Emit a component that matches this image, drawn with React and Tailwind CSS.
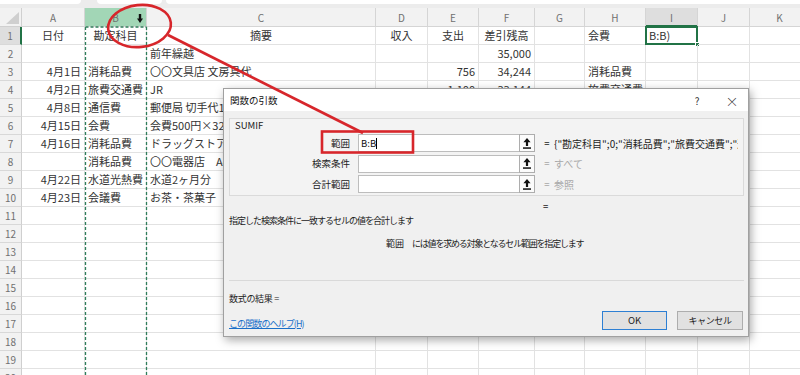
import React from 'react';

const COLS = ['A', 'B', 'C', 'D', 'E', 'F', 'G', 'H', 'I', 'J', 'K'];

const DATA = {
  1: { A: ['日付', 'c'], B: ['勘定科目', 'c'], C: ['摘要', 'c'], D: ['収入', 'c'], E: ['支出', 'c'], F: ['差引残高', 'c'], H: ['会費', 'l'], I: ['B:B)', 'l'] },
  2: { C: ['前年繰越', 'l'], F: ['35,000', 'r'] },
  3: { A: ['4月1日', 'r'], B: ['消耗品費', 'l'], C: ['〇〇文具店 文房具代', 'l'], E: ['756', 'r'], F: ['34,244', 'r'], H: ['消耗品費', 'l'] },
  4: { A: ['4月2日', 'r'], B: ['旅費交通費', 'l'], C: ['JR', 'l'], E: ['1,100', 'r'], F: ['33,144', 'r'], H: ['旅費交通費', 'l'] },
  5: { A: ['4月8日', 'r'], B: ['通信費', 'l'], C: ['郵便局 切手代10枚', 'l'], E: ['840', 'r'], F: ['32,304', 'r'], H: ['通信費', 'l'] },
  6: { A: ['4月15日', 'r'], B: ['会費', 'l'], C: ['会費500円×32名', 'l'] },
  7: { A: ['4月16日', 'r'], B: ['消耗品費', 'l'], C: ['ドラッグストア　洗剤', 'l'] },
  8: { B: ['消耗品費', 'l'], C: ['〇〇電器店　A4用紙', 'l'] },
  9: { A: ['4月22日', 'r'], B: ['水道光熱費', 'l'], C: ['水道2ヶ月分', 'l'] },
  10: { A: ['4月23日', 'r'], B: ['会議費', 'l'], C: ['お茶・茶菓子', 'l'] },
};

const ROWS = Array.from({ length: 20 }, (_, i) => i + 1);

function alignClass(a) {
  if (a === 'r') return 'justify-end';
  if (a === 'c') return 'justify-center';
  return 'justify-start';
}

function RangeIcon() {
  return (
    <svg width="8" height="11" viewBox="0 0 8 11">
      <polygon points="4,0 7.6,4.2 5.1,4.2 5.1,8 2.9,8 2.9,4.2 0.4,4.2" fill="#111" />
      <rect x="0" y="9.3" width="8" height="1.5" fill="#111" />
    </svg>
  );
}

function ArgRow({ label, value, valueGrey, active }) {
  return (
    <div className="flex items-center h-[18px]">
      <div className="w-[120px] text-right text-[9.5px] text-[#222]">{label}</div>
      <div className="ml-[8px] w-[162px] h-[18px] border border-[#bdbdbd] bg-white flex items-center pl-[2px] text-[9.5px] text-[#111]">
        {active && (
          <>
            <span>B:B</span>
            <span className="w-px h-[11px] bg-black"></span>
          </>
        )}
      </div>
      <div className="-ml-px w-[16px] h-[18px] border border-[#adadad] bg-[#fbfbfb] flex items-center justify-center">
        <RangeIcon />
      </div>
      <div className={`ml-[8px] w-[8px] text-center text-[9.5px] ${valueGrey ? 'text-[#a8a8a8]' : 'text-[#222]'}`}>=</div>
      <div className={`ml-[3px] flex-1 overflow-hidden whitespace-nowrap mr-[5px] text-[10px] ${valueGrey ? 'text-[#a8a8a8]' : 'text-[#222]'}`}>
        {value}
      </div>
    </div>
  );
}

function Dialog() {
  return (
    <div className="absolute left-[223px] top-[88px] w-[526px] h-[249px] bg-[#f0f0f0] border border-[#a0a0a0] shadow-[2px_3px_9px_rgba(0,0,0,0.35)] flex flex-col z-10">
      <div className="h-[22px] bg-white flex items-center pl-[6px] text-[9.5px] text-[#111] shrink-0">
        <span>関数の引数</span>
        <span className="ml-auto w-[20px] text-center text-[10px] text-[#333]">?</span>
        <span className="ml-[15px] mr-[6px] w-[20px] text-center text-[13px] leading-none text-[#333] font-light">×</span>
      </div>
      <div className="ml-[5px] mr-[4px] mt-[7px] h-[78px] border border-[#dadada] bg-[#f3f3f3] shrink-0">
        <div className="pl-[5px] h-[12px] leading-[12px] text-[9.5px] text-[#222]">SUMIF</div>
        <div className="mt-[3px] flex flex-col gap-[2.5px]">
          <ArgRow label="範囲" active value={'{"勘定科目";0;"消耗品費";"旅費交通費";"通信費";"会費"}'} />
          <ArgRow label="検索条件" valueGrey value="すべて" />
          <ArgRow label="合計範囲" valueGrey value="参照" />
        </div>
      </div>
      <div className="mt-[3px] h-[14px] leading-[14px] pl-[319px] text-[9.5px] text-[#222] shrink-0">=</div>
      <div className="mt-[1px] h-[14px] leading-[14px] pl-[5px] text-[9px] tracking-[-1px] text-[#222] shrink-0">
        指定した検索条件に一致するセルの値を合計します
      </div>
      <div className="mt-[9px] h-[14px] leading-[14px] pl-[162px] flex text-[9px] text-[#222] shrink-0">
        <span>範囲</span>
        <span className="ml-[8px] tracking-[-1.2px]">には値を求める対象となるセル範囲を指定します</span>
      </div>
      <div className="mt-[29px] ml-[5px] mr-[4px] h-px bg-[#d9d9d9] shrink-0"></div>
      <div className="flex flex-1">
        <div className="flex flex-col pl-[5px]">
          <div className="mt-[11px] h-[14px] leading-[14px] text-[9px] tracking-[-0.3px] text-[#222]">数式の結果 =</div>
          <div className="mt-[11px] h-[14px] leading-[14px] text-[9px] tracking-[-0.9px] text-[#1a6fc9] underline">この関数のヘルプ(H)</div>
        </div>
        <div className="ml-auto self-end mb-[6px] mr-[5px] flex gap-[10px]">
          <div className="w-[65px] h-[19px] border border-[#2d7fd3] bg-[#e1e1e1] flex items-center justify-center text-[9.5px] text-[#222]">OK</div>
          <div className="w-[66px] h-[19px] border border-[#adadad] bg-[#e1e1e1] flex items-center justify-center text-[9px] tracking-[-0.4px] text-[#222]">キャンセル</div>
        </div>
      </div>
    </div>
  );
}

function HeaderRow() {
  return (
    <>
      <div className="h-[19px] bg-[#f2f2f2] border-r border-b border-[#d0d0d0] relative">
        <svg className="absolute right-[2px] bottom-[2px]" width="13" height="12" viewBox="0 0 13 12">
          <polygon points="13,0 13,12 0,12" fill="#cfcfcf" />
        </svg>
      </div>
      {COLS.map((c) => {
        let bg = 'bg-[#f2f2f2]';
        if (c === 'B') bg = 'bg-[#a2d6b6]';
        if (c === 'I') bg = 'bg-[#dedede]';
        return (
          <div key={c} className={`h-[19px] ${bg} border-r border-b border-[#d5d5d5] flex items-center justify-center text-[10px] text-[#707070] relative`}>
            {c}
            {c === 'B' && (
              <svg className="absolute left-[52px] top-[6px]" width="6" height="9" viewBox="0 0 6 9">
                <rect x="1.8" y="0" width="2.4" height="5" fill="#111" />
                <polygon points="0,4.5 6,4.5 3,9" fill="#111" />
              </svg>
            )}
            {c === 'I' && <div className="absolute left-0 right-0 -bottom-px h-[2px] bg-[#217346]"></div>}
          </div>
        );
      })}
    </>
  );
}

function Sheet() {
  return (
    <div className="grid grid-cols-[22px_63px_62px_229px_52px_51px_56px_50px_61px_52px_52px_60px] bg-white">
      <HeaderRow />
      {ROWS.map((r) => (
        <React.Fragment key={r}>
          <div
            className={`h-[18px] border-b border-[#d8d8d8] flex items-center justify-center text-[10px] text-[#707070] ${
              r === 1 ? 'bg-[#dedede] border-r-2 border-r-[#217346]' : 'bg-[#f2f2f2] border-r border-r-[#cfcfcf]'
            }`}
          >
            {r}
          </div>
          {COLS.map((c) => {
            const cell = DATA[r] && DATA[r][c];
            return (
              <div
                key={c}
                className={`h-[18px] border-r border-b border-[#e2e2e2] flex items-center px-[3px] whitespace-nowrap text-[11px] text-[#333] relative ${
                  cell ? alignClass(cell[1]) : ''
                }`}
              >
                {cell ? cell[0] : ''}
                {r === 1 && c === 'I' && (
                  <div className="absolute -left-px -top-px -right-px -bottom-px border-2 border-[#217346]">
                    <div className="absolute -right-[4px] -bottom-[4px] w-[5px] h-[5px] bg-[#217346] border border-white"></div>
                  </div>
                )}
              </div>
            );
          })}
        </React.Fragment>
      ))}
    </div>
  );
}

function TopStrip() {
  return (
    <div className="h-[8px] bg-[#ececec] flex gap-0">
      <div className="w-[81px] h-[4px] bg-white rounded-br-[4px]"></div>
      <div className="ml-[16px] w-[65px] h-[4px] bg-white rounded-b-[4px]"></div>
      <div className="ml-[4px] flex-1 h-[4px] bg-white rounded-bl-[4px]"></div>
    </div>
  );
}

function Overlay() {
  return (
    <svg className="absolute left-0 top-0 z-20 pointer-events-none" width="800" height="375" viewBox="0 0 800 375">
      <line x1="85.5" y1="27" x2="85.5" y2="375" stroke="#2e7d5a" strokeWidth="1.3" strokeDasharray="3 2" />
      <line x1="146.5" y1="27" x2="146.5" y2="375" stroke="#2e7d5a" strokeWidth="1.3" strokeDasharray="3 2" />
      <line x1="85.5" y1="27" x2="146.5" y2="27" stroke="#2e7d5a" strokeWidth="1.3" strokeDasharray="3 2" />
      <ellipse cx="139.5" cy="26" rx="31.5" ry="21" fill="none" stroke="#d7262b" strokeWidth="2.6" transform="rotate(-6 139.5 26)" />
      <line x1="168" y1="35" x2="363" y2="133" stroke="#d7262b" strokeWidth="2.8" />
      <rect x="322" y="131.5" width="91" height="21" fill="none" stroke="#d7262b" strokeWidth="2.6" />
    </svg>
  );
}

export default function App() {
  return (
    <div className="relative w-[800px] h-[375px] overflow-hidden bg-white font-[family-name:'Noto_Sans_CJK_JP','Noto_Sans',sans-serif]">
      <TopStrip />
      <Sheet />
      <Dialog />
      <Overlay />
    </div>
  );
}
